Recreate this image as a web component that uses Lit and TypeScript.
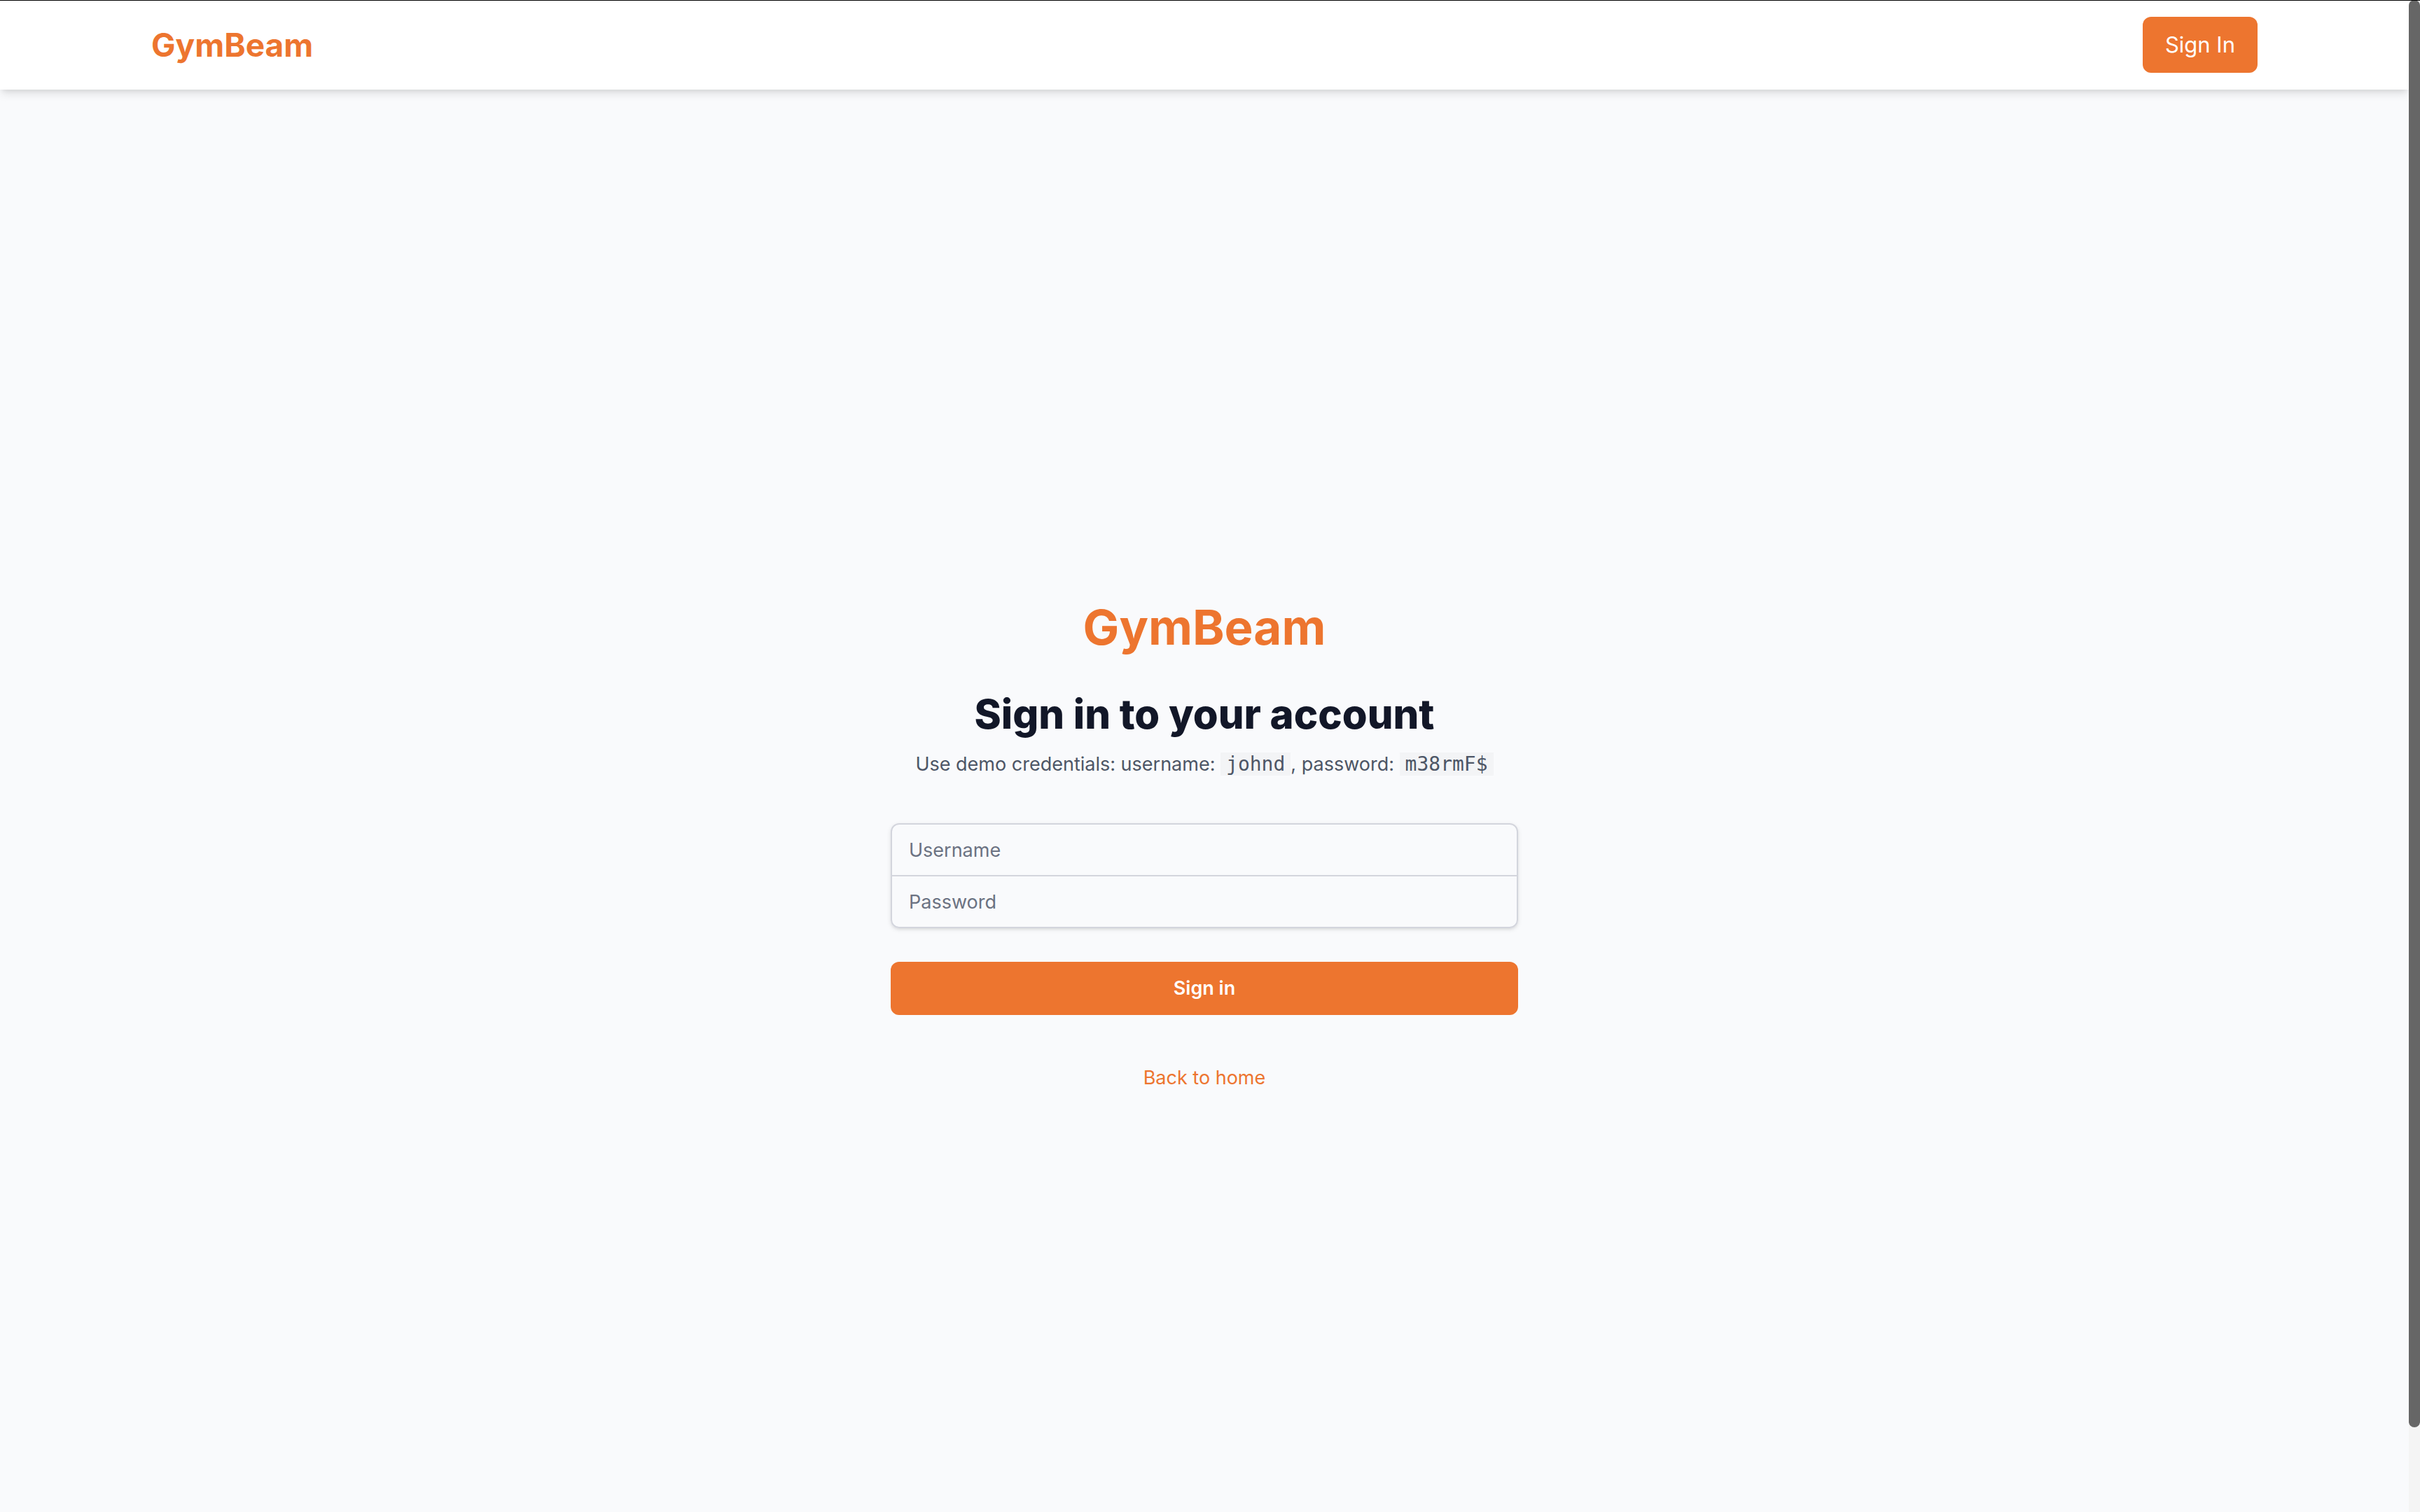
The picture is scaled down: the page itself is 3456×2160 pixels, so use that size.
import { LitElement, html, css } from "lit";
import { customElement } from "lit/decorators.js";

@customElement("app-root")
export class AppRoot extends LitElement {
  static styles = css`
    :host {
      display: block;
      font-family: Inter, "Liberation Sans", sans-serif;
      font-size: 31px;
      line-height: 48px;
      color: #121728;
    }
    *,
    *::before,
    *::after {
      box-sizing: border-box;
    }
    .window {
      display: grid;
      grid-template-columns: 1fr 16px;
      height: 100vh;
      position: relative;
      background: #f9fafc;
    }
    .edge {
      position: absolute;
      top: 0;
      left: 0;
      right: 0;
      height: 1px;
      background: #000;
    }
    .scroller {
      overflow-x: hidden;
      overflow-y: auto;
      scrollbar-width: none;
    }
    .track {
      background: #f4f4f4;
    }
    .thumb {
      height: calc(100% * 2160 / 2288);
      border-radius: 8px;
      background: #666;
    }
    .header {
      position: relative;
      background: #fff;
      box-shadow: 0 8px 12px -2px rgba(0, 0, 0, 0.1), 0 4px 8px -4px rgba(0, 0, 0, 0.1);
    }
    .bar {
      display: flex;
      align-items: center;
      justify-content: space-between;
      max-width: 3072px;
      margin: 0 auto;
      padding: 24px 32px;
    }
    .brand {
      color: #ed752f;
      font-size: 46px;
      line-height: 64px;
      font-weight: 700;
      text-decoration: none;
    }
    .sign-in {
      padding: 16px 32px;
      border-radius: 12px;
      background: #ed752f;
      color: #fff;
      text-decoration: none;
    }
    .main {
      display: flex;
      align-items: center;
      justify-content: center;
      min-height: 100vh;
      padding: 100px 32px 96px;
    }
    .card {
      display: flex;
      flex-direction: column;
      gap: 64px;
      width: 100%;
      max-width: 896px;
      text-align: center;
    }
    .logo {
      color: #ed752f;
      font-size: 69px;
      line-height: 80px;
      font-weight: 700;
    }
    .title {
      margin: 48px 0 0;
      font-size: 58px;
      line-height: 72px;
      font-weight: 800;
    }
    .hint {
      margin: 16px 0 0;
      color: #4d5666;
      font-size: 27px;
      line-height: 40px;
    }
    .code {
      padding: 0 8px;
      background: #f3f4f6;
      font-family: "DejaVu Sans Mono", monospace;
      font-size: 28px;
    }
    .form {
      display: flex;
      flex-direction: column;
      gap: 48px;
    }
    .fields {
      display: flex;
      flex-direction: column;
      border: 2px solid #d3d5dd;
      border-radius: 12px;
      box-shadow: 0 2px 6px rgba(0, 0, 0, 0.1), 0 2px 4px -2px rgba(0, 0, 0, 0.1);
    }
    .input {
      width: 100%;
      height: 72px;
      margin: 0;
      padding: 16px 24px;
      border: 0;
      border-radius: 0;
      background: transparent;
      color: inherit;
      font-family: inherit;
      font-size: 27px;
      line-height: 40px;
      outline: none;
    }
    .input::placeholder {
      color: #6b7282;
      opacity: 1;
    }
    .divider {
      height: 2px;
      background: #d3d5dd;
    }
    .submit {
      padding: 18px 32px;
      border: 0;
      border-radius: 12px;
      background: #ed752f;
      color: #fff;
      font-family: inherit;
      font-size: 27px;
      line-height: 40px;
      font-weight: 600;
    }
    .home {
      color: #ed752f;
      font-size: 27px;
      text-decoration: none;
    }
  `;

  render() {
    return html`
      <div class="window">
        <div class="scroller">
          <header class="header">
            <nav class="bar">
              <a class="brand" href="#home">GymBeam</a>
              <a class="sign-in" href="#login">Sign In</a>
            </nav>
          </header>
          <main class="main">
            <div class="card">
              <div>
                <div class="logo">GymBeam</div>
                <h2 class="title">Sign in to your account</h2>
                <p class="hint">
                  Use demo credentials: username: <code class="code">johnd</code>, password:
                  <code class="code">m38rmF$</code>
                </p>
              </div>
              <form class="form" @submit=${(e: Event) => e.preventDefault()}>
                <div class="fields">
                  <input class="input" type="text" aria-label="Username" autocomplete="username" placeholder="Username" />
                  <div class="divider"></div>
                  <input class="input" type="password" aria-label="Password" autocomplete="current-password" placeholder="Password" />
                </div>
                <button class="submit" type="submit">Sign in</button>
              </form>
              <div><a class="home" href="#home">Back to home</a></div>
            </div>
          </main>
        </div>
        <div class="track"><div class="thumb"></div></div>
        <div class="edge"></div>
      </div>
    `;
  }
}
